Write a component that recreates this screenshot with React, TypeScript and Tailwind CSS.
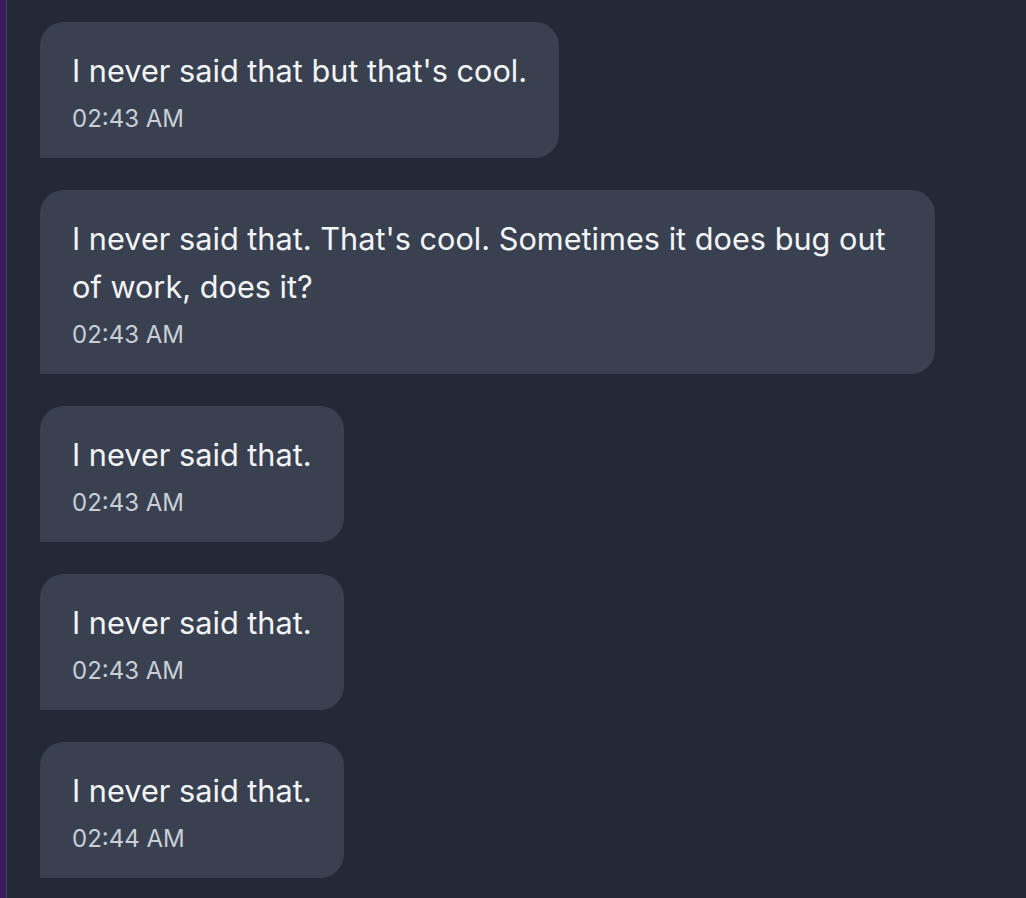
import React from 'react';

interface Message {
  text: string;
  time: string;
}

const messages: Message[] = [
  { text: "I never said that but that's cool.", time: '02:43 AM' },
  { text: "I never said that. That's cool. Sometimes it does bug out of work, does it?", time: '02:43 AM' },
  { text: 'I never said that.', time: '02:43 AM' },
  { text: 'I never said that.', time: '02:43 AM' },
  { text: 'I never said that.', time: '02:44 AM' },
];

const Bubble: React.FC<{ message: Message }> = ({ message }) => (
  <div className="w-fit max-w-[895px] bg-[#394151] rounded-3xl rounded-bl-none px-8 pt-[25px] pb-[23px]">
    <p className="text-[30.7px] leading-[48px] text-[#f3f4f6]">{message.text}</p>
    <p className="mt-2 text-[24px] leading-[32px] text-[#c9ced6]">{message.time}</p>
  </div>
);

export default function App() {
  return (
    <div
      className="flex h-[898px] w-full bg-[#222a38] overflow-hidden"
      style={{ fontFamily: 'Inter, "Noto Sans", sans-serif' }}
    >
      {/* barre latérale */}
      <div className="w-[6px] shrink-0 bg-[#3b1a5e] border-r border-[#434a5a] box-content" />
      <div className="flex-1 flex flex-col gap-8 pl-[33px] pt-[22px]">
        {messages.map((m, i) => (
          <Bubble key={i} message={m} />
        ))}
      </div>
    </div>
  );
}
